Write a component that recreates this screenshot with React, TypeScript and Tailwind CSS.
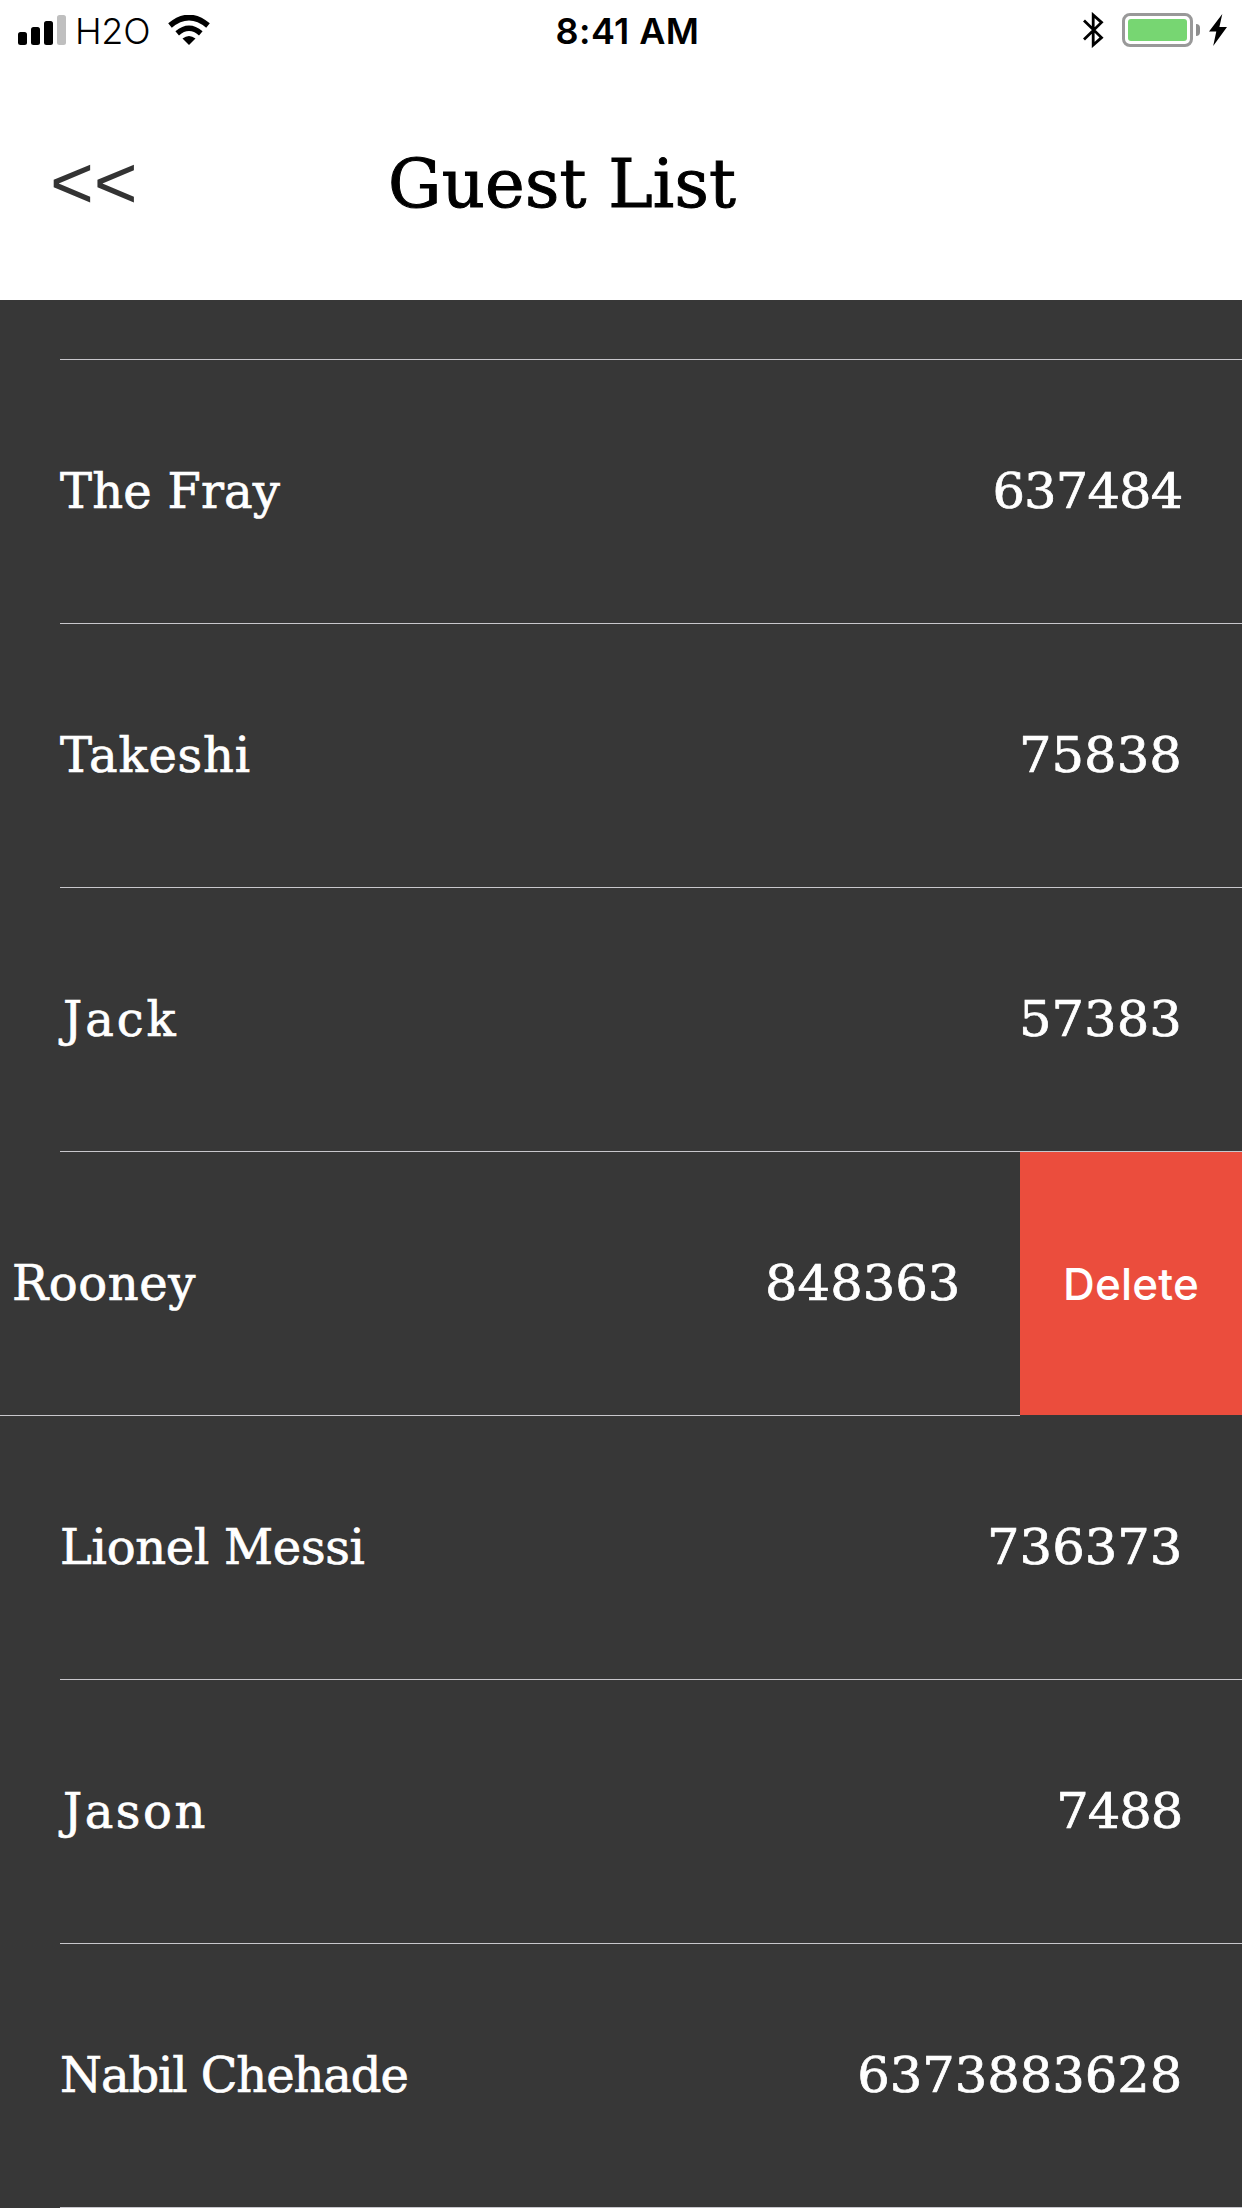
type Guest = { name: string; code: string; nameClass?: string; codeClass?: string; swiped?: boolean };

const guests: Guest[] = [
  { name: "The Fray", code: "637484", nameClass: "tracking-[0.2px]", codeClass: "tracking-[-0.8px]" },
  { name: "Takeshi", code: "75838", nameClass: "tracking-[0.8px]" },
  { name: "Jack", code: "57383", nameClass: "pl-[3px] tracking-[2.9px]" },
  { name: "Rooney", code: "848363", nameClass: "tracking-[0.6px]", swiped: true },
  { name: "Lionel Messi", code: "736373", nameClass: "tracking-[-0.3px]" },
  { name: "Jason", code: "7488", nameClass: "pl-[3px] tracking-[2.5px]", codeClass: "tracking-[-1px]" },
  { name: "Nabil Chehade", code: "6373883628", nameClass: "tracking-[-1.1px]" },
];

function Signal() {
  return (
    <svg width="48" height="30" viewBox="0 0 48 30" className="block">
      <rect x="0" y="17" width="9" height="13" rx="2.5" />
      <rect x="13" y="12" width="9" height="18" rx="2.5" />
      <rect x="26" y="6" width="9" height="24" rx="2.5" />
      <rect x="39" y="0" width="9" height="30" rx="2.5" fill="#bfbfbf" />
    </svg>
  );
}

function Wifi() {
  return (
    <svg width="42" height="30" viewBox="0 0 42 30" className="block">
      <path d="M2 10.5 Q21 -5.5 40 10.5" fill="none" stroke="#000" strokeWidth="5.6" />
      <path d="M9.2 18.4 Q21 8 32.8 18.4" fill="none" stroke="#000" strokeWidth="5.4" />
      <path d="M14.5 23.6 Q21 18.6 27.5 23.6 L21 30 Z" />
    </svg>
  );
}

function Bluetooth() {
  return (
    <svg width="21" height="36" viewBox="0 0 21 36" className="block">
      <path d="M1 8.6 L18.5 25.6 L10.2 33 V3 L18.5 10.4 L1 27.4" fill="none" stroke="#000" strokeWidth="2.8" />
    </svg>
  );
}

function Bolt() {
  return (
    <svg width="18" height="32" viewBox="0 0 18 32" className="block">
      <path d="M13.3 0 L0 17.6 H7.3 L4.2 32 L18 13 H10.4 Z" />
    </svg>
  );
}

function StatusBar() {
  return (
    <div className="grid h-15 grid-cols-3 items-center pl-[18px] pr-[15px] text-[36px] leading-none font-['Inter',sans-serif]">
      <div className="flex items-center">
        <Signal />
        <span className="ml-[9px] w-[93px] whitespace-nowrap pt-[2px] font-[350] tracking-[-0.3px]">H2O</span>
        <Wifi />
      </div>
      <span className="ml-[10px] whitespace-nowrap pt-[2px] text-center font-semibold tracking-[0.4px]">8:41 AM</span>
      <div className="flex items-center justify-end">
        <Bluetooth />
        <div className="ml-[18px] h-[34px] w-[71px] rounded-[8px] border-3 border-[#999] p-[3px]">
          <div className="h-full rounded-[3px] bg-[#77d672]" />
        </div>
        <div className="ml-[3px] h-[12px] w-[4px] rounded-r-full bg-[#8e8e8e]" />
        <div className="ml-[9px]">
          <Bolt />
        </div>
      </div>
    </div>
  );
}

function Row({ guest }: { guest: Guest }) {
  return (
    <li className="flex h-[264px]">
      <div className={guest.swiped ? "flex w-[1020px]" : "flex flex-1 pl-[60px]"}>
        <div
          className={
            guest.swiped
              ? "flex flex-1 items-center justify-between border-b border-[#c8c7cc] pb-[2px] pl-[12px] pr-[60px] [-webkit-text-stroke:0.7px_white]"
              : "flex flex-1 items-center justify-between border-b border-[#c8c7cc] pb-[2px] pr-[60px] [-webkit-text-stroke:0.7px_white]"
          }
        >
          <span className={guest.nameClass}>{guest.name}</span>
          <span className="origin-right scale-x-[1.065]">
            <span className={guest.codeClass}>{guest.code}</span>
          </span>
        </div>
      </div>
      {guest.swiped && (
        <button className="flex h-[263px] w-[222px] items-center justify-center bg-[#eb4d3d] font-['Inter',sans-serif] text-[44px] font-medium tracking-[0.2px]">
          Delete
        </button>
      )}
    </li>
  );
}

export default function App() {
  return (
    <div className="h-[2208px] w-[1242px] overflow-hidden bg-[#373737]">
      <header className="h-[300px] bg-white text-black">
        <StatusBar />
        <div className="flex h-[240px] items-start">
          <button className="ml-[50px] mt-[85px] w-[338px] text-left font-['Liberation_Sans',sans-serif] text-[75px] leading-none text-[#333]">
            {"<<"}
          </button>
          <h1 className="mt-[84px] whitespace-nowrap font-['DejaVu_Serif',serif] text-[67px] leading-[80px] tracking-[0.2px] [-webkit-text-stroke:1px_black]">
            Guest List
          </h1>
        </div>
      </header>
      <div className="ml-[60px] h-[60px] border-b border-[#c8c7cc]" />
      <ul className="whitespace-nowrap font-['DejaVu_Serif',serif] text-[48px] leading-none text-white">
        {guests.map((g) => (
          <Row key={g.name} guest={g} />
        ))}
      </ul>
    </div>
  );
}
